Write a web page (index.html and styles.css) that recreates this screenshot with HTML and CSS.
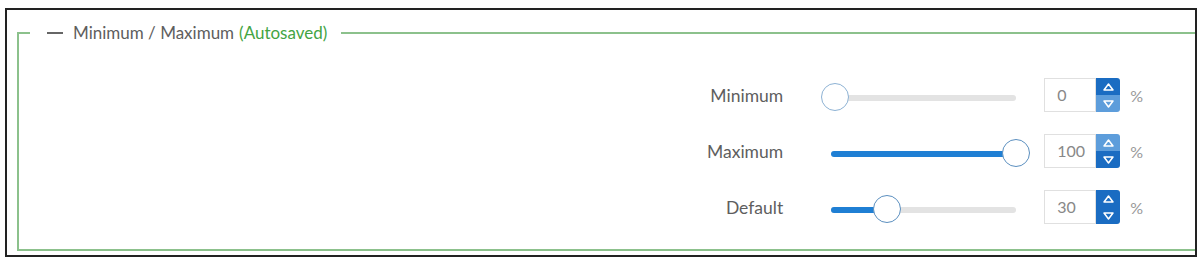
FILE: index.html
```html
<!DOCTYPE html>
<html>
<head>
<meta charset="utf-8">
<link rel="stylesheet" href="styles.css">
</head>
<body>
<div class="frame">
  <fieldset class="group">
    <legend class="legend"><span class="dash"></span>Minimum / Maximum <span class="saved">(Autosaved)</span></legend>
    <div class="rows">
      <div class="row">
        <span class="label">Minimum</span>
        <div class="slider">
          <div class="track"><div class="fill" style="width:0%"></div></div>
          <div class="thumb" style="left:0%"></div>
        </div>
        <div class="num">
          <span class="box">0</span>
          <span class="spin">
            <span class="btn up on"><svg width="11" height="8" viewBox="0 0 11 8"><path d="M5.5 1 L10 7 L1 7 Z" fill="none" stroke="#fff" stroke-width="1.5" stroke-linejoin="round"/></svg></span>
            <span class="btn down off"><svg width="11" height="8" viewBox="0 0 11 8"><path d="M1 1 L10 1 L5.5 7 Z" fill="none" stroke="#fff" stroke-width="1.5" stroke-linejoin="round"/></svg></span>
          </span>
        </div>
        <span class="pct">%</span>
      </div>
      <div class="row">
        <span class="label">Maximum</span>
        <div class="slider">
          <div class="track"><div class="fill" style="width:100%"></div></div>
          <div class="thumb dark" style="left:100%"></div>
        </div>
        <div class="num">
          <span class="box">100</span>
          <span class="spin">
            <span class="btn up off"><svg width="11" height="8" viewBox="0 0 11 8"><path d="M5.5 1 L10 7 L1 7 Z" fill="none" stroke="#fff" stroke-width="1.5" stroke-linejoin="round"/></svg></span>
            <span class="btn down on"><svg width="11" height="8" viewBox="0 0 11 8"><path d="M1 1 L10 1 L5.5 7 Z" fill="none" stroke="#fff" stroke-width="1.5" stroke-linejoin="round"/></svg></span>
          </span>
        </div>
        <span class="pct">%</span>
      </div>
      <div class="row">
        <span class="label">Default</span>
        <div class="slider">
          <div class="track"><div class="fill" style="width:30%"></div></div>
          <div class="thumb dark" style="left:30%"></div>
        </div>
        <div class="num">
          <span class="box">30</span>
          <span class="spin">
            <span class="btn up on"><svg width="11" height="8" viewBox="0 0 11 8"><path d="M5.5 1 L10 7 L1 7 Z" fill="none" stroke="#fff" stroke-width="1.5" stroke-linejoin="round"/></svg></span>
            <span class="btn down on"><svg width="11" height="8" viewBox="0 0 11 8"><path d="M1 1 L10 1 L5.5 7 Z" fill="none" stroke="#fff" stroke-width="1.5" stroke-linejoin="round"/></svg></span>
          </span>
        </div>
        <span class="pct">%</span>
      </div>
    </div>
  </fieldset>
</div>
</body>
</html>
```
FILE: styles.css
```css
html, body {
  margin: 0;
  padding: 0;
  background: #fff;
}
body {
  padding: 8px 7px 2px 5px;
  font-family: Lato, "Open Sans", sans-serif;
}
.frame {
  border: 2px solid #222;
  height: 245px;
  box-sizing: content-box;
  padding: 0 0 0 10px;
  overflow: hidden;
}
.group {
  margin: 13px 0 0 0;
  border: 2px solid #8cc18c;
  border-right: none;
  padding: 0 52px 25px 0;
}
.legend {
  margin-left: 11px;
  padding: 0 14px 0 17px;
  font-size: 17px;
  line-height: 20px;
  color: #5e5e5e;
  display: flex;
  align-items: center;
}
.dash {
  display: inline-block;
  width: 16px;
  height: 2px;
  background: #666;
  margin-right: 10px;
}
.saved {
  color: #43a443;
  margin-left: 5px;
}
.rows {
  padding-top: 35px;
  display: flex;
  flex-direction: column;
  align-items: flex-end;
  gap: 22px;
}
.row {
  display: flex;
  align-items: center;
  height: 34px;
}
.label {
  width: 110px;
  text-align: right;
  font-size: 17.5px;
  color: #5e5e5e;
}
.slider {
  position: relative;
  width: 185px;
  height: 29px;
  margin-left: 48px;
  margin-top: 5px;
  display: flex;
  align-items: center;
}
.track {
  width: 100%;
  height: 6px;
  background: #e3e3e3;
  border-radius: 3px;
  overflow: hidden;
}
.fill {
  height: 100%;
  background: #1f7fd4;
}
.thumb {
  position: absolute;
  top: 0;
  width: 26px;
  height: 26px;
  margin-left: -10px;
  border-radius: 50%;
  background: #fff;
  border: 1.5px solid #8db2d4;
}
.thumb.dark {
  border-color: #5b8fbf;
  margin-left: -14px;
}
.num {
  display: flex;
  margin-left: 28px;
  height: 34px;
}
.box {
  width: 38px;
  height: 32px;
  border: 1px solid #e0e0e0;
  padding-left: 12px;
  font-size: 16px;
  line-height: 32px;
  color: #888;
}
.spin {
  display: flex;
  flex-direction: column;
  width: 24px;
  border-radius: 0 3px 3px 0;
  overflow: hidden;
}
.btn {
  flex: 1;
  display: flex;
  align-items: center;
  justify-content: center;
}
.btn.on {
  background: #1a6cc2;
}
.btn.off {
  background: #5d9ddb;
}
.pct {
  margin-left: 10px;
  font-size: 16px;
  color: #999;
}
```
